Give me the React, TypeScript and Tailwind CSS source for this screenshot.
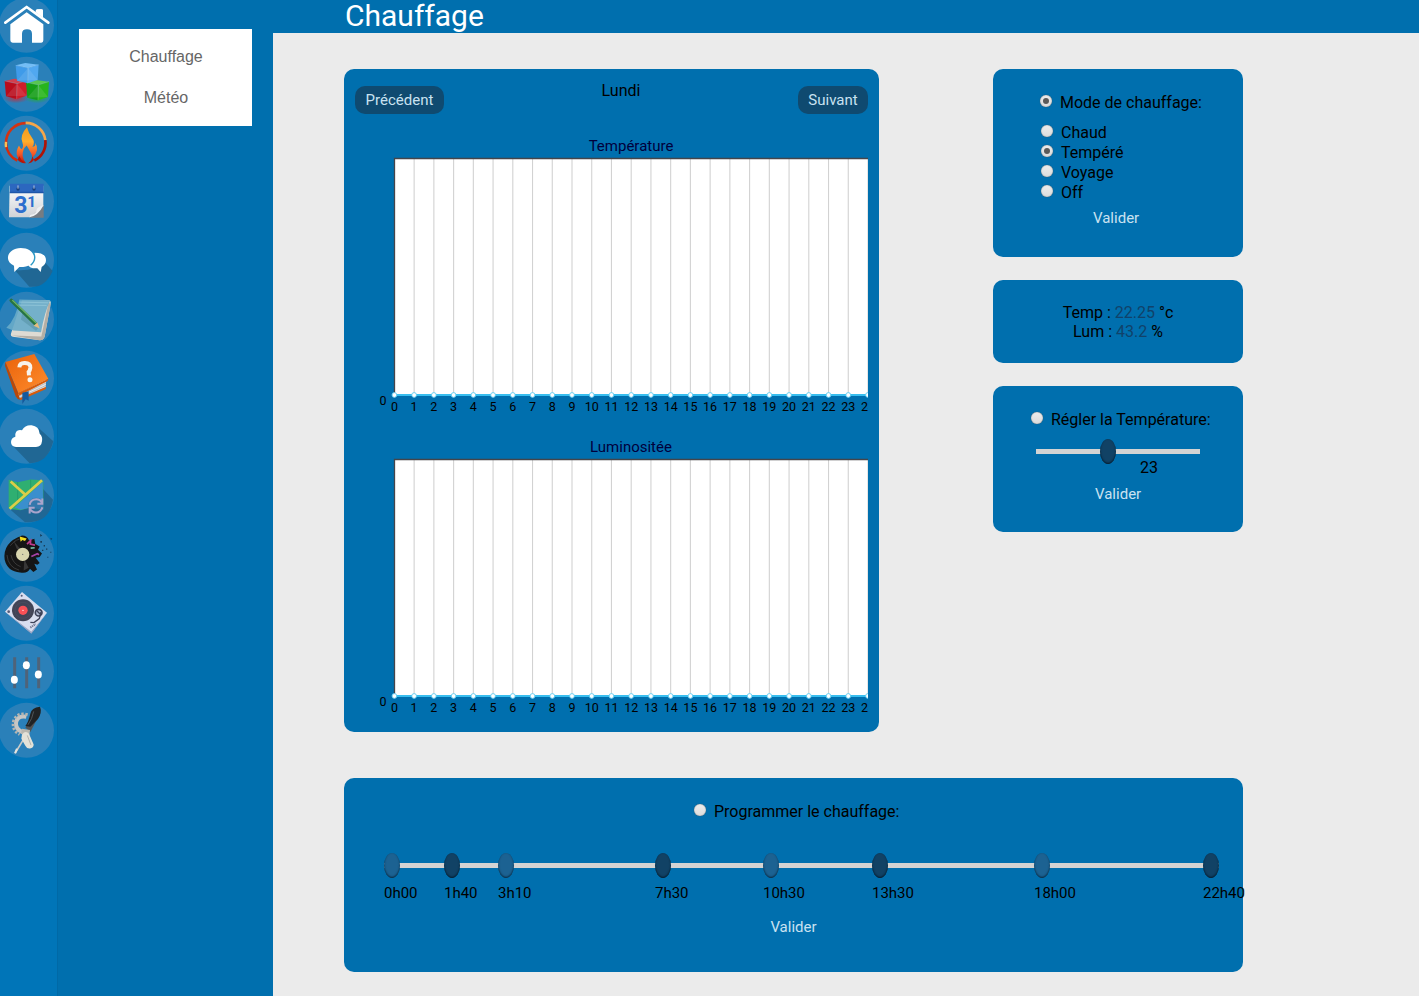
import type { ReactNode } from "react";

const PITCH = 58.77;

/* Every glyph is drawn at three units per pixel; cy is the middle of its disc. */
function NavIcon({ cy, label, children }: { cy: number; label: string; children: ReactNode }) {
  return (
    <a href="#" aria-label={label} className="block h-[58.77px] w-[57px] shrink-0">
      <svg width="57" height={PITCH} viewBox={`-26.5 -25.3 57 ${PITCH}`} className="block overflow-visible">
        <circle r="27.5" fill="#2a80b9" />
        <g transform={`scale(.33333) translate(-79.5 ${-cy})`}>{children}</g>
      </svg>
    </a>
  );
}

function Cube({ x, y, top, left, right }: { x: number; y: number; top: string; left: string; right: string }) {
  return (
    <g transform={`translate(${x} ${y})`}>
      <path d="M-34 -24L-5 -31L35 -26L3 -16Z" fill={top} />
      <path d="M-34 -24L3 -16L2 30L-30 22Z" fill={left} />
      <path d="M3 -16L35 -26L32 20L2 30Z" fill={right} />
      <path d="M-30 22L3 -16L32 20Z" fill="#fff" opacity=".1" />
      <path d="M-34 -24L3 -16L35 -26M3 -16L2 30" stroke="#fff" strokeOpacity=".25" strokeWidth="2" fill="none" />
    </g>
  );
}

function Sidebar() {
  return (
    <nav className="flex h-full w-[57px] shrink-0 flex-col overflow-hidden bg-[#0075b8]">
      <svg width="0" height="0" className="absolute">
        <defs>
          <linearGradient id="flame" x1="0" y1="0" x2="0" y2="1">
            <stop offset="0" stopColor="#f79a1c" /><stop offset=".4" stopColor="#ffae2c" /><stop offset=".75" stopColor="#f4552a" /><stop offset="1" stopColor="#b81508" />
          </linearGradient>
          <linearGradient id="book" x1="0" y1="0" x2="1" y2="1">
            <stop offset="0" stopColor="#e9620a" /><stop offset="1" stopColor="#ff8d2e" />
          </linearGradient>
          <linearGradient id="paper" x1="0" y1="0" x2="0" y2="1">
            <stop offset="0" stopColor="#fff" /><stop offset="1" stopColor="#cfd2d6" />
          </linearGradient>
          <radialGradient id="glow"><stop offset="0" stopColor="#d7232c" /><stop offset="1" stopColor="#d7232c" stopOpacity="0" /></radialGradient>
          <radialGradient id="glowGreen"><stop offset="0" stopColor="#25b325" /><stop offset="1" stopColor="#25b325" stopOpacity="0" /></radialGradient>
        </defs>
      </svg>
      <NavIcon cy={76} label="Accueil">
        <path d="M107 31Q112 27 125 28Q129 28 129 32V58L107 42Z" fill="#fff" />
        <path d="M16 68L80 21L145 68" fill="none" stroke="#2a80b9" strokeWidth="16" strokeLinejoin="round" />
        <path d="M107 33Q107 28 112 28H124Q129 28 129 33V53L107 37Z" fill="#fff" />
        <path d="M16 68L80 21L145 68" fill="none" stroke="#fff" strokeWidth="8" strokeLinecap="round" strokeLinejoin="round" />
        <path d="M31 73L80 37L130 73V121Q130 128 124 128H96V101Q96 88 81 88Q66 88 66 101V128H38Q31 128 31 121Z" fill="#fff" />
      </NavIcon>
      <NavIcon cy={252} label="Modules">
        <ellipse cx="48" cy="294" rx="38" ry="15" fill="url(#glow)" opacity=".8" />
        <ellipse cx="111" cy="294" rx="38" ry="15" fill="url(#glowGreen)" opacity=".8" />
        <Cube x={48} y={266} top="#d0404e" left="#b90d1c" right="#cf1c2a" />
        <Cube x={112} y={270} top="#58c650" left="#159e18" right="#27b51c" />
        <Cube x={81} y={219} top="#73bdf5" left="#3f9be9" right="#51a8f0" />
      </NavIcon>
      <NavIcon cy={428.5} label="Chauffage">
        <path d="M52 480A59 59 0 0 1 18 429" fill="none" stroke="#d32b0d" strokeWidth="8" />
        <path d="M18 429A59 59 0 0 1 77 368" fill="none" stroke="#d43212" strokeWidth="8" />
        <path d="M77 367A59 59 0 0 1 136 419" fill="none" stroke="#f6a64a" strokeWidth="8" />
        <path d="M136 419A59 59 0 0 1 103 480" fill="none" stroke="#b01305" strokeWidth="8" />
        <path d="M18 440Q17 432 18 424" stroke="#ffbd50" strokeWidth="7" fill="none" />
        <path d="M81 380Q86 400 97 413Q107 425 97 439Q109 439 105 427Q122 448 96 474L92 488Q103 470 89 451L80 435Q67 446 68 466Q70 480 78 488Q57 484 52 468Q46 452 57 435Q60 444 65 446Q72 440 67 425Q59 403 81 380Z" fill="url(#flame)" />
        <path d="M53 478Q62 489 76 488Q63 480 58 467ZM102 478Q97 487 84 489Q95 481 97 468Z" fill="#b81508" />
      </NavIcon>
      <NavIcon cy={94.8} label="Agenda">
        <path d="M29 48H130V110L101 143H27Z" fill="url(#paper)" />
        <path d="M131 107V144H88Z" fill="#777c82" />
        <path d="M30 42H131V70H30Z" fill="#2c67bf" />
        <path d="M29 66H131V71H29Z" fill="#1e56a9" />
        <circle cx="54" cy="58" r="5" fill="#163f7d" /><circle cx="102" cy="58" r="5" fill="#163f7d" />
        <path d="M54 47V57M102 47V57" stroke="#b4c4da" strokeWidth="3" />
        <g fontWeight="700" fill="#2d6fce" fontFamily="Roboto, sans-serif">
          <text x="43" y="130" fontSize="69">3</text>
          <text x="82" y="111" fontSize="46">1</text>
        </g>
        <path d="M131 106Q111 113 110 120Q109 132 91 136L88 143Q114 139 131 106Z" fill="#eef0f2" />
      </NavIcon>
      <NavIcon cy={271} label="Messages">
        <path d="M44 300L88 350Q134 356 158 303L134 276Q104 305 44 300Z" fill="#206794" />
        <path d="M104 248Q138 248 138 271Q138 283 125 291L122 306L112 295Q88 296 84 284Z" fill="#fff" />
        <path d="M62 234C86 234 102 246 102 263C102 281 84 292 58 291L43 306L42 287C9 272 24 234 62 234Z" fill="#fff" />
        <path d="M98 245Q113 266 92 286" fill="none" stroke="#2e9bc6" strokeWidth="4" />
      </NavIcon>
      <NavIcon cy={447.5} label="Notes">
        <path d="M66 390L145 390Q154 391 152 400L134 499Q131 510 120 510L38 500Q31 498 33 490Z" fill="#dedbd3" />
        <path d="M146 396L124 499L36 496L118 510Q131 511 134 499L152 402Z" fill="#b5afa5" />
        <path d="M58 388L151 390Q134 425 123 486L40 481L19 473Q49 445 58 388Z" fill="#68abc9" opacity=".9" />
        <path d="M58 396L145 398M55 405L140 406" stroke="#98cbdd" strokeWidth="2" />
        <path d="M67 428L116 472L108 482L63 448Z" fill="#2f6c78" opacity=".25" />
        <path d="M34 391L106 461" stroke="#277343" strokeWidth="11" strokeLinecap="round" />
        <path d="M37 390L108 458" stroke="#6eb467" strokeWidth="4" />
        <path d="M101 467L112 457L119 475Z" fill="#e7bd7f" />
      </NavIcon>
      <NavIcon cy={95.8} label="Aide">
        <path d="M53 143L139 97L137 124L61 159Z" fill="#e5e6e7" />
        <path d="M57 149L138 110M59 154L138 117" stroke="#9fa4aa" strokeWidth="2" />
        <path d="M16 47L103 23L145 97L55 141Z" fill="url(#book)" />
        <path d="M16 47L55 141L60 160Q51 159 47 150L15 58Z" fill="#b94809" />
        <path d="M54 141L145 97L143 104L57 148ZM58 156L138 121L137 129L61 162Z" fill="#d65b0c" />
        <path d="M67 139L86 135V163L77 159L67 173Z" fill="#15599d" />
        <path d="M58 63Q59 49 75 50Q92 51 91 64Q90 73 86 77L87 87" stroke="#f7f3ec" strokeWidth="12" fill="none" />
        <circle cx="90" cy="100" r="7.5" fill="#f7f3ec" />
      </NavIcon>
      <NavIcon cy={272} label="Nuage">
        <path d="M38 300L89 353Q144 352 160 287L116 247L124 298Z" fill="#206794" />
        <path d="M48 304Q33 303 33 289Q34 276 46 273Q44 254 60 253L66 254Q76 237 95 239Q117 242 119 264Q129 273 126 287Q124 304 108 304Z" fill="#fff" />
      </NavIcon>
      <NavIcon cy={448.4} label="Carte">
        <path d="M33 493L75 529Q149 533 159 462L130 430Z" fill="#206794" />
        <path d="M26 402L53 409L92 401L130 403V490L92 485L61 493L26 489Z" fill="#2faf71" />
        <path d="M128 408L130 492L92 485L62 492L44 485Z" fill="#3a8fce" />
        <path d="M53 409V470M92 402V435" stroke="#17805f" strokeOpacity=".4" strokeWidth="3" />
        <path d="M126 403L29 489M32 407L76 447" stroke="#dccd48" strokeWidth="8" />
        <circle cx="108" cy="480" r="24" fill="#2f6c9a" opacity=".65" />
        <path d="M89 477Q91 460 109 460Q121 460 126 471M127 458V474H112M127 484Q123 500 108 500Q96 500 90 489M89 503V486H104" fill="none" stroke="#aaa4cb" strokeWidth="6" />
      </NavIcon>
      <NavIcon cy={96.7} label="Vinyle">
        <path d="M66 40Q82 40 87 55L103 50L106 66L119 73L114 83L126 94L119 105L107 107L119 123L112 128L103 125L111 142L100 150L90 140Q82 156 60 151Q23 149 14 113Q7 61 66 40Z" fill="#151515" />
        <path d="M31 71Q48 49 68 50M21 99Q24 135 57 144M33 99Q38 125 62 134" fill="none" stroke="#4c4c4c" strokeWidth="2" />
        <path d="M41 57L65 85L50 80ZM73 112L86 137L71 145Z" fill="#6a6a6a" opacity=".4" />
        <circle cx="68" cy="97" r="20" fill="#d7d5ae" /><circle cx="68" cy="97" r="2" fill="#777" />
        <path d="M59 43L80 49L75 57L67 54L62 59Z" fill="#f2dc1c" />
        <path d="M81 66L92 55L91 66L105 69" stroke="#bd3b8b" strokeWidth="5" fill="none" />
        <path d="M92 78L104 77" stroke="#74c1a8" strokeWidth="5" /><path d="M94 103L112 95L117 98" stroke="#a644a7" strokeWidth="5" fill="none" />
        <path d="M120 36L127 40L121 44ZM151 47L157 50L153 54ZM121 57H126V62H121ZM131 69H135V73H131ZM138 79H142V83H138ZM126 83H130V87H126ZM151 89H154V92H151ZM142 104H145V107H142Z" fill="#173d59" />
      </NavIcon>
      <NavIcon cy={273} label="Platine">
        <path d="M66 209L141 271L94 333L15 268Z" fill="#d9deef" />
        <path d="M15 268L94 328L141 271L94 334Z" fill="#9aa5c4" />
        <circle cx="69" cy="264" r="33" fill="#424456" /><circle cx="69" cy="264" r="24" fill="none" stroke="#4d4f62" strokeWidth="2" /><circle cx="69" cy="264" r="14" fill="#fa5056" /><circle cx="69" cy="264" r="2" fill="#fff" />
        <circle cx="65" cy="220" r="3" fill="#555a76" /><circle cx="26" cy="268" r="4" fill="#555a76" />
        <circle cx="116" cy="271" r="10" fill="#aeb8d1" stroke="#3d4258" strokeWidth="5" />
        <path d="M123 269L118 289L102 301L91 300M111 266L121 276" stroke="#3d4258" strokeWidth="4" fill="none" />
        <path d="M91 316L107 305" stroke="#6f7791" strokeWidth="6" strokeDasharray="4 2" />
      </NavIcon>
      <NavIcon cy={449.3} label="Réglages">
        <path d="M44 407V500M80 407V500M116 407V500" stroke="#4f6379" strokeWidth="9" />
        <ellipse cx="43" cy="475" rx="10.5" ry="12" fill="#fff" /><ellipse cx="79" cy="431" rx="10.5" ry="12" fill="#fff" /><ellipse cx="115" cy="459" rx="10.5" ry="12" fill="#fff" />
      </NavIcon>
      <NavIcon cy={625.6} label="Outils">
        <path d="M79 585Q53 580 48 602Q46 623 67 631" fill="none" stroke="#c6c6c4" strokeWidth="12" />
        <path d="M83 579Q52 570 41 597Q34 624 59 638" fill="none" stroke="#b5b5b2" strokeWidth="9" strokeDasharray="7 5" />
        <path d="M46 693L71 652" stroke="#c9cac8" strokeWidth="5" />
        <path d="M45 695L51 681" stroke="#e4e4df" strokeWidth="6" />
        <path d="M76 617L101 578L115 585L91 631Z" fill="#515354" />
        <path d="M91 576Q94 558 120 555Q127 572 114 592L91 615L76 613Q86 599 91 576Z" fill="#202324" />
        <path d="M101 569Q97 591 84 609" stroke="#505558" strokeWidth="3" fill="none" />
        <path d="M66 621L90 625L88 641L63 637Z" fill="#b9b7af" />
        <path d="M66 638Q77 625 87 636L101 668Q101 679 90 680Q80 681 76 672L64 651Z" fill="#e4e2d8" />
        <path d="M82 641L93 670" stroke="#b4b3ac" strokeWidth="3" />
      </NavIcon>
    </nav>
  );
}

function Radio({ checked = false }: { checked?: boolean }) {
  return (
    <span className="flex size-3 shrink-0 items-center justify-center rounded-full bg-linear-to-b from-[#ededed] to-[#dcdcdc] shadow-[inset_0_0_1px_#777,0_0_1px_#555]">
      {checked && <span className="size-1.5 rounded-full bg-[#5a5a5a]" />}
    </span>
  );
}

function Thumb({ light = false }: { light?: boolean }) {
  return (
    <span
      className={
        light
          ? "block h-[25px] w-4 rounded-[50%] bg-[#1c6292] shadow-[inset_0_-1px_2px_#08263c]"
          : "block h-[25px] w-4 rounded-[50%] bg-[#114265] shadow-[inset_0_-1px_2px_#031a2b]"
      }
    />
  );
}

function Chart({ title }: { title: string }) {
  const hours = Array.from({ length: 25 }, (_, i) => i);
  const at = (i: number) => 39.4 + i * 19.733;
  return (
    <section className="h-[301px]">
      <h3 className="h-[22px] pl-[39px] text-center text-[15px] leading-[22px] text-[#00003c]">{title}</h3>
      <svg width="513" height="262" viewBox="0 0 513 262" className="block overflow-hidden" fontFamily="Roboto, sans-serif" fontSize="12.5">
        <rect x="39" y="1" width="474" height="238" fill="#fff" />
        {hours.slice(1).map((h) => (
          <path key={h} d={`M${at(h)} 1V238`} stroke="#d2d2d2" strokeWidth="1.1" />
        ))}
        <path d="M39.5 239V1.5H513" fill="none" stroke="#45454a" strokeWidth="1.3" />
        <path d="M39.4 238H513" stroke="#38bdee" strokeWidth="2" />
        {hours.map((h) => (
          <circle key={h} cx={at(h)} cy="238" r="2.4" fill="#fff" stroke="#5dcbef" strokeWidth=".9" />
        ))}
        <text x="28" y="248" textAnchor="middle">0</text>
        {hours.map((h) => (
          <text key={h} x={at(h)} y="254" textAnchor="middle">{h}</text>
        ))}
      </svg>
    </section>
  );
}

function Validate() {
  return <button className="block text-[15px] leading-5 text-[#c9e2f1]">Valider</button>;
}

const steps = [
  { x: 0, label: "0h00" },
  { x: 60, label: "1h40" },
  { x: 114, label: "3h10" },
  { x: 271, label: "7h30" },
  { x: 379, label: "10h30" },
  { x: 488, label: "13h30" },
  { x: 650, label: "18h00" },
  { x: 819, label: "22h40" },
];

export default function App() {
  return (
    <div className="flex h-[996px] w-[1419px] overflow-hidden bg-[#ebebeb] font-['Roboto',sans-serif] text-base text-black">
      <Sidebar />
      <aside className="w-[216px] shrink-0 border-l border-[#0069a6] bg-[#006fae] pt-[29px] pl-[21px]">
        <div className="h-[97px] w-[173px] bg-white pt-[7px] pl-px text-center font-['Liberation_Sans',sans-serif] leading-[41px] text-[#666]">
          <a href="#" className="block">Chauffage</a>
          <a href="#" className="block">Météo</a>
        </div>
      </aside>
      <main className="flex-1">
        <h1 className="h-[33px] bg-[#006fae] pl-[72px] text-[30px] leading-[31px] text-white">Chauffage</h1>
        <div className="flex gap-[114px] pt-9 pl-[71px]">
          <div className="h-[663px] w-[535px] rounded-[10px] bg-[#006fae] px-[11px]">
            <div className="flex h-[66px] items-start justify-between">
              <button className="mt-[17px] h-7 w-[89px] rounded-[10px] bg-[#0f4a70] text-[15px] leading-7 text-[#c9e2f1]">Précédent</button>
              <span className="mt-3 leading-5">Lundi</span>
              <button className="mt-[17px] h-7 w-[70px] rounded-[10px] bg-[#0f4a70] text-[15px] leading-7 text-[#c9e2f1]">Suivant</button>
            </div>
            <Chart title="Température" />
            <Chart title="Luminositée" />
          </div>
          <div className="flex w-[250px] flex-col gap-[23px]">
            <section className="h-[188px] rounded-[10px] bg-[#006fae] pt-[23px] pl-[47px]">
              <label className="flex h-5 gap-2 pt-[3px] leading-[21px] whitespace-nowrap"><Radio checked />
                <span className="-mt-[3px]">Mode de chauffage:</span>
              </label>
              <div className="mt-[10px] pl-px">
                {["Chaud", "Tempéré", "Voyage", "Off"].map((mode) => (
                  <label key={mode} className="flex h-5 gap-2 pt-[3px] leading-[21px]"><Radio checked={mode === "Tempéré"} />
                    <span className="-mt-[3px]">{mode}</span>
                  </label>
                ))}
              </div>
              <div className="mt-[6px] pl-[53px]"><Validate /></div>
            </section>
            <section className="h-[83px] rounded-[10px] bg-[#006fae] pt-[23px] text-center leading-[19px]">
              <p>Temp : <span className="text-[#10426a]">22.25</span> °c</p>
              <p>Lum : <span className="text-[#10426a]">43.2</span> %</p>
            </section>
            <section className="h-[146px] rounded-[10px] bg-[#006fae] pt-[23px]">
              <label className="flex h-5 gap-2 pt-[3px] pl-[38px] leading-[21px] whitespace-nowrap"><Radio />
                <span className="-mt-[3px]">Régler la Température:</span>
              </label>
              <div className="relative mt-[10px] ml-[43px] flex h-[25px] w-[164px] items-center">
                <span className="h-[5px] w-full bg-[#d3d3d3]" />
                <span className="absolute left-16"><Thumb /></span>
              </div>
              <p className="-mt-[6px] pl-[147px] leading-5">23</p>
              <div className="mt-[6px] pl-[102px]"><Validate /></div>
            </section>
          </div>
        </div>
        <section className="mt-[46px] ml-[71px] h-[194px] w-[899px] rounded-[10px] bg-[#006fae] pt-[23px]">
          <label className="flex h-5 gap-2 pt-[3px] pl-[350px] leading-[21px] whitespace-nowrap"><Radio />
            <span className="-mt-[3px]">Programmer le chauffage:</span>
          </label>
          <div className="relative mt-[32px] ml-10 flex h-[25px] w-[835px] items-center">
            <span className="h-[5px] w-full bg-[#d3d3d3]" />
            {steps.map((step, i) => (
              <span key={step.label} className="absolute top-0 w-4" style={{ left: step.x }}>
                <Thumb light={i % 2 === 0} />
                <span className="mt-[5px] block text-[15px] leading-5 whitespace-nowrap">{step.label}</span>
              </span>
            ))}
          </div>
          <div className="mt-[39px] flex justify-center"><Validate /></div>
        </section>
      </main>
    </div>
  );
}
